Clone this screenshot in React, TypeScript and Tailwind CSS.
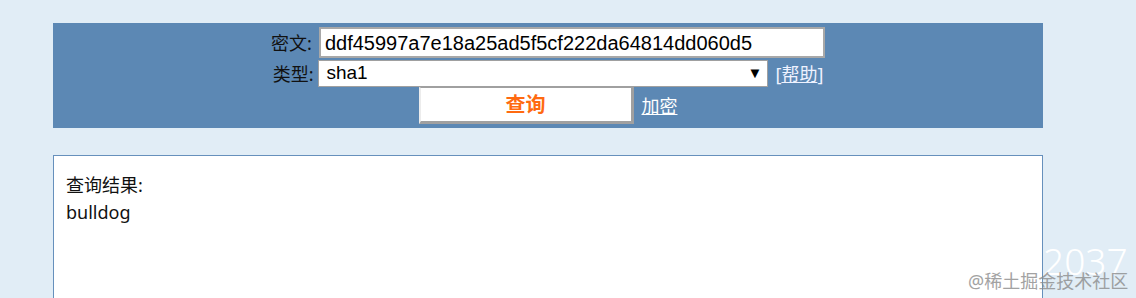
import React from 'react';

const cjk = '"Noto Sans", "Noto Sans CJK SC", sans-serif';
const arial = '"Liberation Sans", "Noto Sans CJK SC", sans-serif';

function FormRow({ children }: { children: React.ReactNode }) {
  return <div className="flex items-center justify-center">{children}</div>;
}

export default function App() {
  return (
    <div className="relative h-[298px] bg-[#e1edf6] pt-[23px] overflow-hidden" style={{ fontFamily: cjk }}>
      <div className="ml-[53px] w-[990px] bg-[#5c88b4] pt-[4px] pb-[4px]">
        <FormRow>
          <span className="text-[18px] leading-none text-[#111] mr-[7px]">密文:</span>
          <div
            className="w-[506px] h-[31px] bg-white border-2 border-[#a8a8a8] flex items-center pl-[4px] text-[20px] text-black"
            style={{ fontFamily: arial }}
          >
            ddf45997a7e18a25ad5f5cf222da64814dd060d5
          </div>
        </FormRow>
        <FormRow>
          <div className="flex items-center mt-[2px]">
            <span className="text-[18px] leading-none text-[#111] mr-[5px]">类型:</span>
            <div
              className="w-[450px] h-[27px] bg-white border border-[#a0a0a0] flex items-center justify-between pl-[7px] pr-[5px] text-[19px] text-black"
              style={{ fontFamily: arial }}
            >
              <span>sha1</span>
              <span className="text-[15px]">▼</span>
            </div>
            <span className="ml-[7px] text-[18px] leading-none text-[#eef2ff]">
              [<span className="underline">帮助</span>]
            </span>
          </div>
        </FormRow>
        <FormRow>
          <div className="flex items-center">
            <button
              type="button"
              className="w-[215px] h-[37px] bg-white border-t border-l-2 border-b-[3px] border-r-[3px] border-t-[#a0a0a0] border-l-[#ececec] border-b-[#a0a0a0] border-r-[#a0a0a0] text-[20px] font-bold text-[#ff6a10] leading-none"
            >
              查询
            </button>
            <a className="ml-[8px] text-[18px] text-white underline leading-none">加密</a>
          </div>
        </FormRow>
      </div>

      <div className="ml-[53px] mt-[27px] w-[990px] h-[160px] bg-white border border-[#6690bc] pt-[16px] pl-[12px] text-[18px] leading-[27px] text-[#111]">
        <div>查询结果:</div>
        <div>bulldog</div>
      </div>

      <div className="absolute left-[1043px] top-[242px] text-[37px] font-light leading-none text-white" style={{ fontFamily: cjk }}>
        2037
      </div>
      <div className="absolute left-[968px] top-[272px] text-[18px] leading-none text-[#8c8c8c] opacity-80">
        @稀土掘金技术社区
      </div>
    </div>
  );
}
